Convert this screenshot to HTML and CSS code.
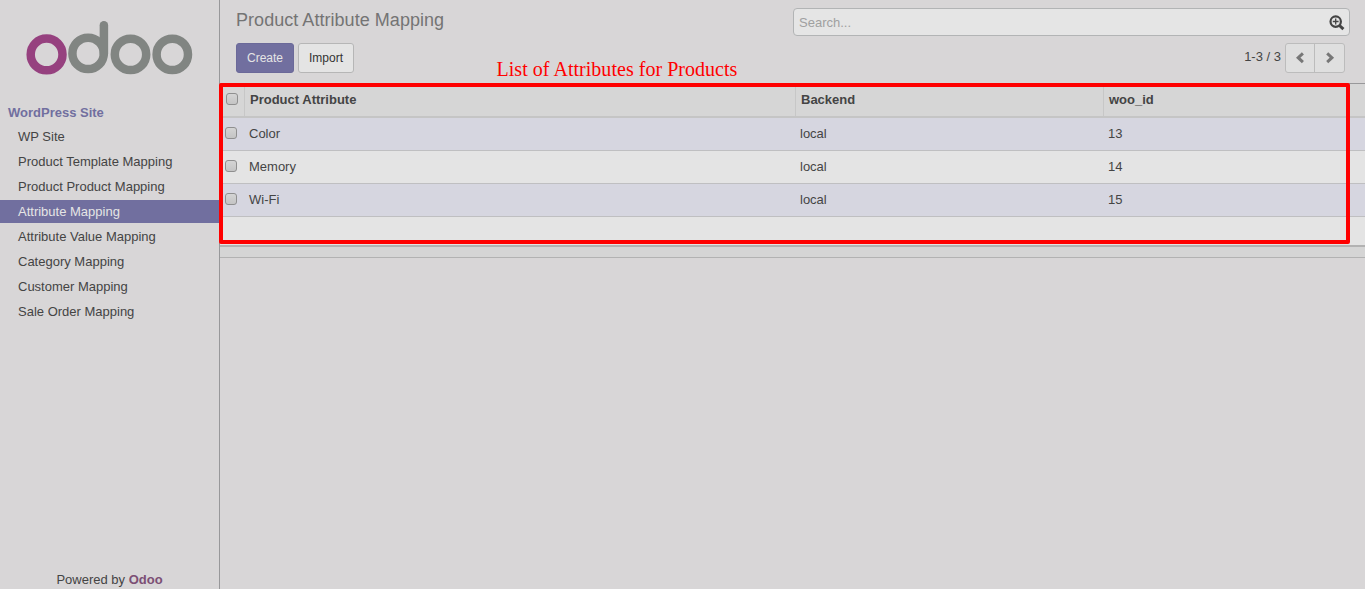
FILE: index.html
```html
<!DOCTYPE html>
<html lang="en">
<head>
<meta charset="utf-8">
<title>Product Attribute Mapping - Odoo</title>
<link rel="stylesheet" href="styles.css">
</head>
<body>
<div class="app">
  <aside class="sidebar">
    <svg class="logo" width="219" height="100" viewBox="0 0 219 100" fill="none" stroke="#818582" stroke-width="8.5">
      <circle cx="46.6" cy="54.4" r="15.9" stroke="#96417f"/>
      <circle cx="88.1" cy="53.4" r="15.7"/>
      <path d="M103.9 53.5V25.3" stroke-linecap="round"/>
      <circle cx="130.5" cy="54.4" r="15.7"/>
      <circle cx="172.3" cy="54.4" r="15.7"/>
    </svg>
    <div class="menu-title">WordPress Site</div>
    <ul class="menu">
      <li>WP Site</li>
      <li>Product Template Mapping</li>
      <li>Product Product Mapping</li>
      <li class="active">Attribute Mapping</li>
      <li>Attribute Value Mapping</li>
      <li>Category Mapping</li>
      <li>Customer Mapping</li>
      <li>Sale Order Mapping</li>
    </ul>
    <footer class="powered">Powered by <b>Odoo</b></footer>
  </aside>
  <main class="main">
    <header class="panel">
      <div class="panel-left">
        <h1>Product Attribute Mapping</h1>
        <div class="buttons">
          <button class="btn primary">Create</button>
          <button class="btn">Import</button>
        </div>
      </div>
      <div class="panel-right">
        <div class="search">
          <span>Search...</span>
          <svg width="16" height="16" viewBox="0 0 16 16" fill="none" stroke="#444">
            <circle cx="6.7" cy="6.6" r="5.2" stroke-width="2.2"/>
            <path d="M10.5 10.5L14.4 14.2" stroke-width="3"/>
            <path d="M3.8 6.5H9.6M6.7 3.6V9.4" stroke-width="1.3"/>
          </svg>
        </div>
        <div class="pager">
          <span>1-3 / 3</span>
          <div class="pager-buttons">
            <button><svg width="10" height="12" viewBox="0 0 10 12"><path d="M7.9 1.3L3.2 5.7L7.9 10.1"/></svg></button>
            <button><svg width="10" height="12" viewBox="0 0 10 12"><path d="M2.2 1.3L6.9 5.7L2.2 10.1"/></svg></button>
          </div>
        </div>
      </div>
    </header>
    <section class="list">
      <div class="row head"><span class="check"><i></i></span><span>Product Attribute</span><span>Backend</span><span>woo_id</span></div>
      <div class="row odd"><span class="check"><i></i></span><span>Color</span><span>local</span><span>13</span></div>
      <div class="row"><span class="check"><i></i></span><span>Memory</span><span>local</span><span>14</span></div>
      <div class="row odd"><span class="check"><i></i></span><span>Wi-Fi</span><span>local</span><span>15</span></div>
      <div class="blank"></div>
      <div class="foot"></div>
    </section>
  </main>
  <div class="note">List of Attributes for Products</div>
  <div class="highlight"></div>
</div>
</body>
</html>
```
FILE: styles.css
```css
* { box-sizing: border-box; }
body {
  margin: 0;
  background: #d8d6d7;
  color: #444;
  font: 13px/18px "Liberation Sans", Arial, sans-serif;
}
.app { position: relative; display: flex; height: 589px; overflow: hidden; }

.sidebar {
  width: 220px;
  flex: none;
  display: flex;
  flex-direction: column;
  border-right: 1px solid #98989a;
}
.logo { display: block; flex: none; }
.menu-title { padding: 4px 8px 3px; font-weight: bold; color: #716f9f; }
.menu { list-style: none; margin: 0; padding: 0; display: flex; flex-direction: column; gap: 2px; }
.menu li { height: 23px; padding-left: 18px; line-height: 23px; }
.menu .active { background: #716f9f; color: #e5e5e5; }
.powered { margin-top: auto; text-align: center; }
.powered b { color: #7c4f74; }

.main { flex: 1; min-width: 0; }
.panel {
  height: 84px;
  padding: 8px 15px 0 16px;
  display: flex;
  justify-content: space-between;
  border-bottom: 1px solid #98989a;
}
h1 { margin: 0; height: 35px; font-size: 18px; line-height: 24px; font-weight: normal; letter-spacing: 0.04px; color: #747474; }
.buttons { display: flex; gap: 4px; }
.btn {
  height: 30px;
  padding: 0 10px;
  border: 1px solid #b6b6b6;
  border-radius: 3px;
  background: #e4e4e4;
  color: #333;
  font: 12px/28px "Liberation Sans", Arial, sans-serif;
}
.btn.primary { width: 58px; background: #716f9f; border-color: #6b6999; color: #e5e5e5; }
.panel-right { width: 557px; }
.search {
  height: 28px;
  display: flex;
  justify-content: space-between;
  align-items: center;
  padding: 1px 4px 0 5px;
  border: 1px solid #b2b4b5;
  border-radius: 4px;
  background: #e5e5e5;
  color: #a0a0a0;
}
.pager { display: flex; justify-content: flex-end; gap: 4px; margin-top: 7px; padding-right: 5px; line-height: 27px; }
.pager-buttons {
  display: grid;
  grid-template-columns: 28px 30px;
  width: 60px;
  height: 30px;
  border: 1px solid #bcbcbc;
  border-radius: 3px;
  background: #dfdfdf;
}
.pager-buttons button {
  display: flex;
  align-items: center;
  justify-content: center;
  padding: 0;
  border: 0;
  background: none;
}
.pager-buttons button + button { border-left: 1px solid #bcbcbc; }
.pager-buttons path { fill: none; stroke: #777; stroke-width: 3; }

.row {
  height: 33px;
  display: grid;
  grid-template-columns: 24px 551px 308px 1fr;
  border-bottom: 1px solid #bfbfc1;
  background: #e4e4e4;
  line-height: 31px;
}
.row span { padding-left: 5px; }
.row.odd { background: #d6d6e0; }
.row .check { padding: 9px 0 0 5px; }
.check i {
  display: block;
  width: 12px;
  height: 12px;
  border: 1px solid #8f8f8f;
  border-radius: 3px;
  background: linear-gradient(#d4d4d4, #c4c4c4);
}
.head { height: 34px; border-bottom: 2px solid #c5c5c5; background: #d6d6d6; font-weight: bold; }
.head span + span { border-left: 1px solid #c7c7c7; }
.head .check { padding-left: 6px; }
.blank { height: 28px; background: #e4e4e4; }
.foot { height: 13px; border-top: 2px solid #b2b2b2; border-bottom: 1px solid #b2b2b2; background: #d5d5d5; }

/* Annotation laid over the list view */
.note {
  position: absolute;
  left: 496.5px;
  top: 57px;
  color: #f00;
  font: 20px/24px "Liberation Serif", "Times New Roman", serif;
  letter-spacing: 0.03px;
  white-space: nowrap;
}
.highlight {
  position: absolute;
  left: 219px;
  top: 83px;
  width: 1131px;
  height: 161px;
  border: 4px solid #f00;
  border-radius: 2px;
}
```
